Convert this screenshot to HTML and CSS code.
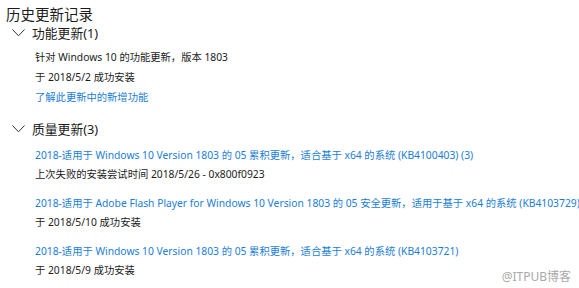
FILE: index.html
```html
<!DOCTYPE html>
<html lang="zh-CN">
<head>
  <meta charset="UTF-8" />
  <title>历史更新记录</title>
  <link rel="stylesheet" href="styles.css">
</head>
<body>
  <h1 class="title">历史更新记录</h1>

  <div class="group">
    <div class="group-head">
      <svg class="chev" width="13" height="8" viewBox="0 0 13 8"><polyline points="0.5,0.5 6.5,6.8 12.5,0.5" fill="none" stroke="#333" stroke-width="1"/></svg>
      <span>功能更新(1)</span>
    </div>
    <div class="group-body first">
      <div class="line">针对 Windows 10 的功能更新，版本 1803</div>
      <div class="line">于 2018/5/2 成功安装</div>
      <a class="link more" href="#">了解此更新中的新增功能</a>
    </div>
  </div>

  <div class="group second">
    <div class="group-head">
      <svg class="chev" width="13" height="8" viewBox="0 0 13 8"><polyline points="0.5,0.5 6.5,6.8 12.5,0.5" fill="none" stroke="#333" stroke-width="1"/></svg>
      <span>质量更新(3)</span>
    </div>
    <div class="group-body">
      <div class="entry">
        <a class="link" href="#">2018-适用于 Windows 10 Version 1803 的 05 累积更新，适合基于 x64 的系统 (KB4100403) (3)</a>
        <div class="line">上次失败的安装尝试时间 2018/5/26 - 0x800f0923</div>
      </div>
      <div class="entry">
        <a class="link" href="#">2018-适用于 Adobe Flash Player for Windows 10 Version 1803 的 05 安全更新，适用于基于 x64 的系统 (KB4103729)</a>
        <div class="line">于 2018/5/10 成功安装</div>
      </div>
      <div class="entry">
        <a class="link" href="#">2018-适用于 Windows 10 Version 1803 的 05 累积更新，适合基于 x64 的系统 (KB4103721)</a>
        <div class="line">于 2018/5/9 成功安装</div>
      </div>
    </div>
  </div>

  <div class="watermark">@ITPUB博客</div>
</body>
</html>
```

FILE: styles.css
```css
body {
  margin: 0;
  padding: 5px 0 0 6px;
  background-color: #ffffff;
  color: #1b1b1b;
  font-family: "Noto Sans", "Noto Sans CJK SC", sans-serif;
  position: relative;
  height: 283px;
  overflow: hidden;
}
.title {
  margin: 0;
  font-size: 14.5px;
  font-weight: normal;
  line-height: 18px;
}
.group-head {
  display: flex;
  align-items: center;
  gap: 7px;
  margin: 1px 0 0 6px;
  font-size: 12.8px;
  line-height: 18px;
}
.chev {
  display: block;
}
.group-body {
  display: flex;
  flex-direction: column;
  padding-left: 29px;
  font-size: 10.3px;
}
.group-body.first {
  margin-top: 6px;
}
.group-body.first .line {
  line-height: 19.5px;
}
.more {
  margin-top: 1px;
}
.group.second {
  margin-top: 13px;
}
.group.second .group-body {
  margin-top: 8px;
  gap: 11px;
}
.entry {
  display: flex;
  flex-direction: column;
  line-height: 18px;
}
.link {
  color: #1a7dd6;
  text-decoration: none;
  line-height: 19px;
  white-space: nowrap;
}
.line {
  line-height: 18px;
  white-space: nowrap;
}
.watermark {
  position: absolute;
  right: 8px;
  bottom: 4px;
  font-size: 12px;
  line-height: 15px;
  color: #a9a9a9;
}
```
